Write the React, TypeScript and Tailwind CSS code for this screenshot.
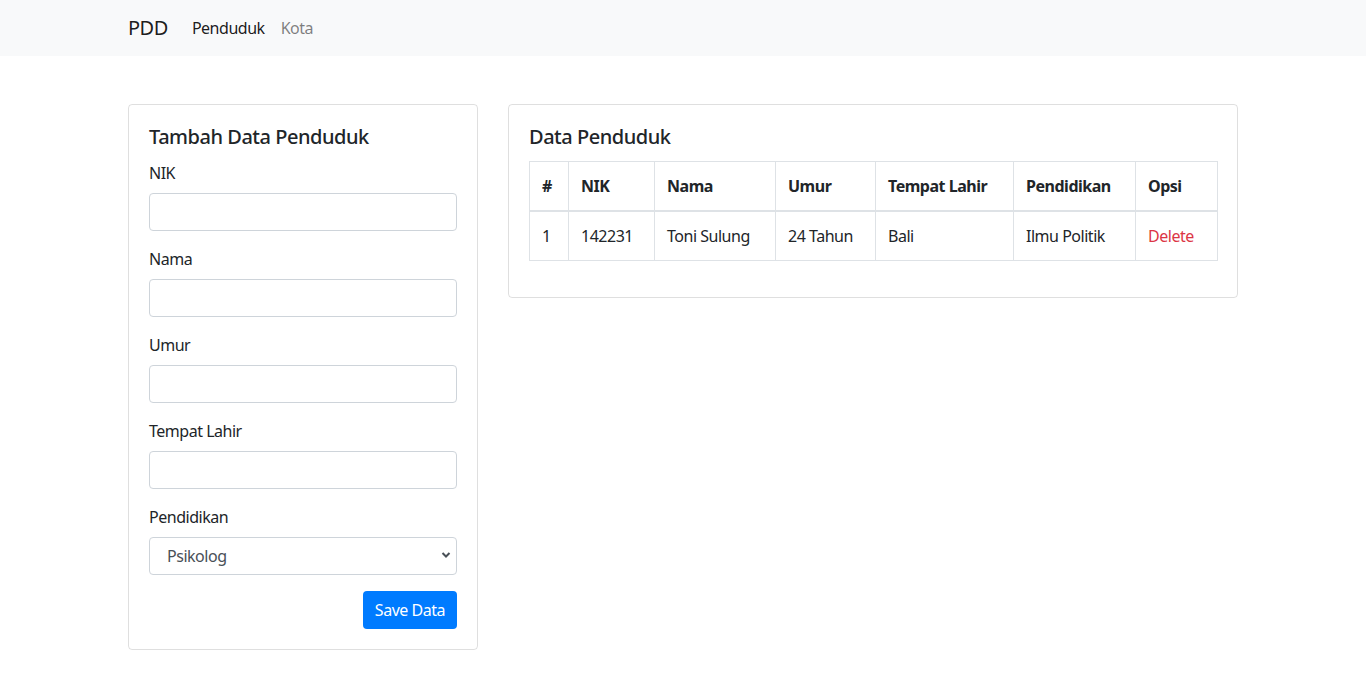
import React from "react";

const font = { fontFamily: '"Noto Sans", "Open Sans", sans-serif', letterSpacing: "-0.03em" };

function Field({ label }: { label: string }) {
  return (
    <div className="mb-4">
      <label className="block mb-2 text-base leading-6">{label}</label>
      <input className="block w-full h-[38px] px-3 border border-[#ced4da] rounded text-base text-[#495057] bg-white" />
    </div>
  );
}

export default function App() {
  const th = "border border-[#dee2e6] border-b-2 p-3 text-left font-bold align-bottom";
  const td = "border border-[#dee2e6] p-3 align-top";
  return (
    <div className="min-h-screen bg-white text-[#212529] text-base leading-6" style={font}>
      <nav className="bg-[#f8f9fa] h-14">
        <div className="w-[1140px] mx-auto px-[15px] h-full flex items-center">
          <span className="text-xl leading-[30px] mr-4 text-[rgba(0,0,0,0.9)]">PDD</span>
          <span className="px-2 text-[rgba(0,0,0,0.9)]">Penduduk</span>
          <span className="px-2 text-[rgba(0,0,0,0.5)]">Kota</span>
        </div>
      </nav>
      <div className="w-[1140px] mx-auto px-[15px] mt-12 flex gap-[30px] items-start">
        <div className="w-[350px] shrink-0 border border-[rgba(0,0,0,0.125)] rounded p-5">
          <h5 className="text-xl leading-6 font-medium mb-3">Tambah Data Penduduk</h5>
          <Field label="NIK" />
          <Field label="Nama" />
          <Field label="Umur" />
          <Field label="Tempat Lahir" />
          <div className="mb-4">
            <label className="block mb-2 text-base leading-6">Pendidikan</label>
            <div className="relative">
              <select
                defaultValue="Psikolog"
                className="block w-full h-[38px] pl-[17px] pr-8 border border-[#ced4da] rounded text-base text-[#495057] bg-white appearance-none"
                style={font}
              >
                <option>Psikolog</option>
                <option>Ilmu Politik</option>
              </select>
              <svg className="absolute right-[6px] top-[14px]" width="10" height="8" viewBox="0 0 10 8">
                <path d="M1.5 2 L5 5.5 L8.5 2" stroke="#495057" strokeWidth="2" fill="none" />
              </svg>
            </div>
          </div>
          <div className="flex justify-end">
            <button className="bg-[#007bff] text-white rounded px-3 h-[38px] text-base leading-6">Save Data</button>
          </div>
        </div>
        <div className="w-[730px] shrink-0 border border-[rgba(0,0,0,0.125)] rounded p-5">
          <h5 className="text-xl leading-6 font-medium mb-3">Data Penduduk</h5>
          <table className="w-full table-fixed border-collapse mb-4">
            <colgroup>
              <col className="w-[39px]" />
              <col className="w-[86px]" />
              <col className="w-[121px]" />
              <col className="w-[100px]" />
              <col className="w-[138px]" />
              <col className="w-[122px]" />
              <col className="w-[82px]" />
            </colgroup>
            <thead>
              <tr>
                <th className={th}>#</th>
                <th className={th}>NIK</th>
                <th className={th}>Nama</th>
                <th className={th}>Umur</th>
                <th className={th}>Tempat Lahir</th>
                <th className={th}>Pendidikan</th>
                <th className={th}>Opsi</th>
              </tr>
            </thead>
            <tbody>
              <tr>
                <td className={td}>1</td>
                <td className={td}>142231</td>
                <td className={td}>Toni Sulung</td>
                <td className={td}>24 Tahun</td>
                <td className={td}>Bali</td>
                <td className={td}>Ilmu Politik</td>
                <td className={td}><span className="text-[#dc3545]">Delete</span></td>
              </tr>
            </tbody>
          </table>
        </div>
      </div>
    </div>
  );
}
